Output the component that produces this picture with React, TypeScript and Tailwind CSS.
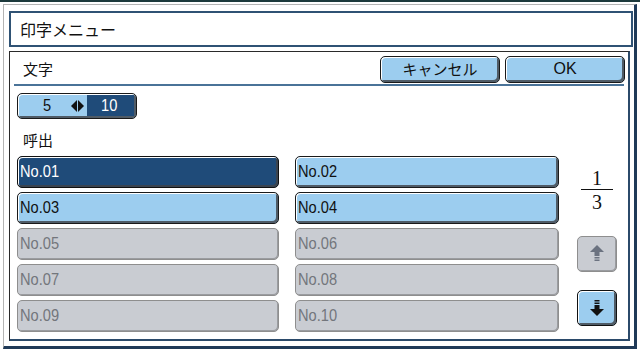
import React from 'react';

const jp = "font-['Noto_Sans_CJK_JP',sans-serif]";
const latin = "font-['Liberation_Sans',sans-serif]";

type Variant = 'blue' | 'navy' | 'off';

const skin: Record<Variant, string> = {
    blue: 'border-[#1a1a1a] bg-[#9ccdef] text-[#111] shadow-[inset_1px_1px_0_#ffffff,inset_-2px_-2px_0_#4f5b66]',
    navy: 'border-[#111] bg-[#1f4b79] text-white shadow-[inset_1px_1px_0_#ffffff,inset_-2px_-2px_0_#3a4450]',
    off: 'border-[#8e8e8e] bg-[#c9ccd2] text-[#73767c] shadow-[inset_-1px_-1px_0_#9a9ca0]',
};

const Key: React.FC<{ variant: Variant; className?: string; children?: React.ReactNode }> = ({ variant, className = '', children }) => (
    <div className={`flex items-center rounded-[5px] border ${skin[variant]} ${className}`}>{children}</div>
);

// condensed latin text, the panel's font is narrower than Arial
const Narrow = ({ children }: { children: React.ReactNode }) => (
    <span className="inline-block scale-x-[0.86] origin-left whitespace-nowrap">{children}</span>
);

const ArrowIcon = ({ up, color }: { up?: boolean; color: string }) => (
    <svg width="14" height="18" viewBox="0 0 14 18" fill={color}>
        {up ? (
            <>
                <polygon points="7,0 14,7 0,7" />
                <rect x="4.5" y="7" width="5" height="4" />
                <rect x="4.5" y="12" width="5" height="1.5" />
                <rect x="4.5" y="14.5" width="5" height="1.5" />
            </>
        ) : (
            <>
                <rect x="4.5" y="1" width="5" height="1.5" />
                <rect x="4.5" y="3.5" width="5" height="1.5" />
                <rect x="4.5" y="6" width="5" height="4" />
                <polygon points="0,10 14,10 7,17" />
            </>
        )}
    </svg>
);

const slots = [1, 2, 3, 4, 5, 6, 7, 8, 9, 10];

export default function App() {
    return (
        <div className="w-[640px] h-[351px] bg-white overflow-hidden">
            <div className="h-[2px] bg-[#1d3a3c]" />
            <div className="ml-[3px] mt-[2px] w-[634px] h-[345px] border-l border-t border-[#b4b4b4] border-r-[3px] border-b-[3px] border-r-[#1f3a58] border-b-[#1f3a58] pl-[5px] pt-[6px]">
                {/* title */}
                <div className={`w-[624px] h-[36px] border-2 border-[#2f5274] flex items-center pl-[9px] text-[16px] text-[#111] ${jp}`}>
                    印字メニュー
                </div>

                {/* panel */}
                <div className="mt-[4px] w-[621px] h-[290px] border-l border-t border-l-[#2a2a2a] border-t-[#2a2a2a] border-r-2 border-b-2 border-r-[#2b4a6a] border-b-[#2b4a6a] overflow-hidden">
                    <div className="flex items-center h-[32px] pt-[2px] pl-[13px] pr-[3px]">
                        <span className={`text-[15px] text-[#111] ${jp}`}>文字</span>
                        <div className="ml-auto flex gap-[5px]">
                            <Key variant="blue" className={`w-[120px] h-[27px] justify-center text-[15px] ${jp}`}>キャンセル</Key>
                            <Key variant="blue" className={`w-[120px] h-[27px] justify-center text-[16px] ${latin}`}>OK</Key>
                        </div>
                    </div>
                    <div className="mx-[4px] h-[2px] bg-[#4a7398]" />

                    <div className="pl-[7px]">
                        <div className={`mt-[7px] w-[120px] h-[26px] flex rounded-[5px] border border-[#1a1a1a] bg-[#9ccdef] shadow-[inset_1px_1px_0_#ffffff,inset_-2px_-2px_0_#4f5b66] pt-[1px] pl-[1px] pr-[2px] pb-[2px] text-[17px] ${latin}`}>
                            <div className="flex-1 flex items-center">
                                <span className="ml-[24px] text-[#111]"><Narrow>5</Narrow></span>
                                <svg className="ml-[19px]" width="13" height="12" viewBox="0 0 13 12" fill="#111">
                                    <polygon points="0,6 6,0 6,12" />
                                    <polygon points="7,0 13,6 7,12" />
                                </svg>
                            </div>
                            <div className="w-[47px] bg-[#1f4b79] text-white flex items-center pl-[14px]"><Narrow>10</Narrow></div>
                        </div>

                        <div className={`mt-[11px] h-[20px] leading-[20px] pl-[6px] text-[15px] text-[#111] ${jp}`}>呼出</div>

                        <div className="mt-[6px] flex">
                            <div className="grid grid-cols-[262px_264px] gap-x-[16px] gap-y-[4px]">
                                {slots.map(n => (
                                    <Key
                                        key={n}
                                        variant={n === 1 ? 'navy' : n <= 4 ? 'blue' : 'off'}
                                        className={`h-[32px] pl-[2px] text-[17px] ${latin}`}
                                    >
                                        <Narrow>No.{String(n).padStart(2, '0')}</Narrow>
                                    </Key>
                                ))}
                            </div>

                            <div className="ml-[18px] w-[40px] flex flex-col items-center">
                                <div className="mt-[13px] leading-[18px] text-[20px] text-[#111] font-['Liberation_Serif',serif]">1</div>
                                <div className="mt-[2px] w-[32px] h-[1px] bg-[#111]" />
                                <div className="mt-[3px] leading-[18px] text-[20px] text-[#111] font-['Liberation_Serif',serif]">3</div>
                                <Key variant="off" className="mt-[25px] w-[40px] h-[36px] justify-center">
                                    <ArrowIcon up color="#6b7280" />
                                </Key>
                                <Key variant="blue" className="mt-[18px] w-[40px] h-[36px] justify-center border-[#111]">
                                    <ArrowIcon color="#111" />
                                </Key>
                            </div>
                        </div>
                    </div>
                </div>
            </div>
        </div>
    );
}
